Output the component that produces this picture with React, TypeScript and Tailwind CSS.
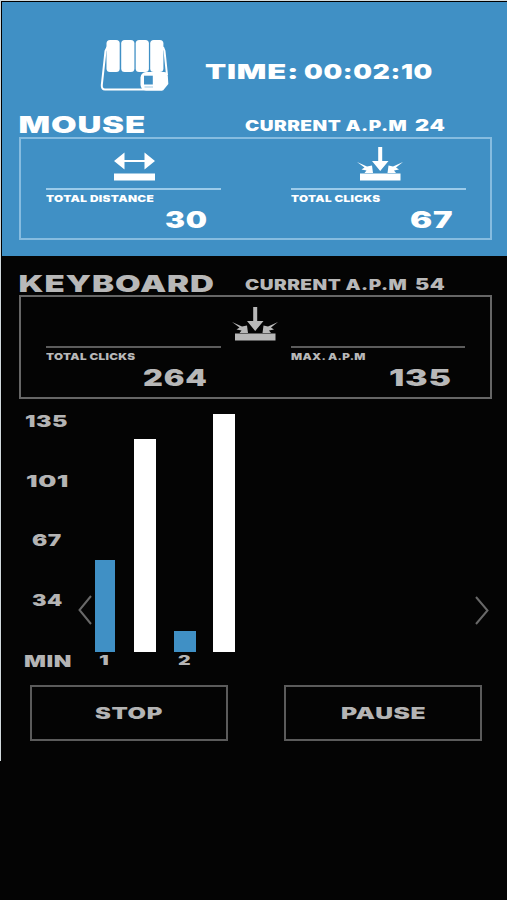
import React from "react";
import clsx from "clsx";

type WideTextProps = {
  text: string;
  width: number;
  className?: string;
};

// Stretches a label sideways until its ink fills the given width.
function WideText({ text, width, className }: WideTextProps) {
  const ref = React.useRef<HTMLSpanElement>(null);
  const [transform, setTransform] = React.useState("none");

  React.useLayoutEffect(() => {
    const ctx = document.createElement("canvas").getContext("2d");
    if (!ref.current || !ctx) return;
    const style = getComputedStyle(ref.current);
    ctx.font = `${style.fontWeight} ${style.fontSize} ${style.fontFamily}`;
    const spacing = parseFloat(style.letterSpacing) || 0;
    const box = ctx.measureText(text);
    const ink =
      box.actualBoundingBoxLeft +
      box.actualBoundingBoxRight +
      spacing * (text.length - 1);
    const scale = width / ink;
    setTransform(
      `translateX(${box.actualBoundingBoxLeft * scale}px) scaleX(${scale})`
    );
  }, [text, width]);

  return (
    <span
      className={clsx(
        "block h-4 text-left leading-4 font-black tracking-wide whitespace-nowrap",
        className
      )}
      style={{ width }}
    >
      <span ref={ref} className="inline-block origin-left" style={{ transform }}>
        {text}
      </span>
    </span>
  );
}

function Logo() {
  return (
    <svg width="70" height="54" viewBox="0 0 70 54" fill="none">
      <path
        d="M7.500 8 L5.500 12 L1.800 46 Q1.500 50.500 5 50.500 H62"
        stroke="white"
        strokeWidth="2"
      />
      <path d="M63 8 L64.500 12 L67 36" stroke="white" strokeWidth="2" />
      <rect x="6.500" y="1" width="13.200" height="32" rx="3.500" fill="white" />
      <rect x="21.200" y="1" width="13.200" height="32" rx="3.500" fill="white" />
      <rect x="35.700" y="1" width="13.200" height="32" rx="3.500" fill="white" />
      <rect x="50.200" y="1" width="13.200" height="32" rx="3.500" fill="white" />
      <path
        d="M46 33 H64 Q67.500 33 67.800 37 L68.300 45 L63 51.500 H46 Q41 51 40.500 46 V38.500 Q41 33.500 46 33 Z"
        fill="white"
      />
      <rect x="44" y="36.700" width="8.800" height="8.800" fill="#4090c5" />
      <path d="M44.500 48 H53" stroke="#4090c5" strokeWidth="1" opacity="0.5" />
    </svg>
  );
}

function DistanceIcon() {
  return (
    <svg width="41" height="34" viewBox="0 0 41 34" fill="white" className="ml-0.5">
      <path d="M0 14 L10.500 5.500 V13 H30.500 V5.500 L41 14 L30.500 22.500 V15 H10.500 V22.500 Z" />
      <rect y="26.500" width="41" height="7" />
    </svg>
  );
}

function ClickIcon({ className }: { className?: string }) {
  return (
    <svg width="48" height="34" viewBox="0 0 48 34" fill="currentColor" className={className}>
      <path d="M22.200 0 H26.200 V14 H32.500 L24.200 24 L16 14 H22.200 Z" />
      <path d="M1 15 L11 19.500 L16 18.500 L17 26 H8.500 L10.500 23.500 L5.500 22.500 L8.500 20.500 Z" />
      <path d="M47 15 L37 19.500 L32.500 18.500 L31.500 26 H40 L38 23.500 L43 22.500 L40 20.500 Z" />
      <rect x="4" y="26.500" width="40.500" height="7" />
    </svg>
  );
}

type StatProps = {
  label: string;
  labelWidth: number;
  value: string;
  valueWidth: number;
  lineClass: string;
};

function Stat({ label, labelWidth, value, valueWidth, lineClass }: StatProps) {
  return (
    <div className="flex w-[175px] flex-col">
      <div className={clsx("h-0.5", lineClass)} />
      <WideText text={label} width={labelWidth} className="mt-px text-[9.5px]" />
      <WideText text={value} width={valueWidth} className="mt-[5px] mr-3.5 self-end text-[22.5px]" />
    </div>
  );
}

type SectionTitleProps = {
  title: string;
  titleWidth: number;
  apm: string;
};

function SectionTitle({ title, titleWidth, apm }: SectionTitleProps) {
  return (
    <div className="flex items-center pl-[18px]">
      <div className="w-[225px]">
        <WideText text={title} width={titleWidth} className="text-[23px]" />
      </div>
      <WideText text="CURRENT A.P.M" width={162} className="mt-0.5 text-[14.5px]" />
      <WideText text={apm} width={30} className="ml-2 pt-px text-[15.5px]" />
    </div>
  );
}

const axisLabels = [
  { text: "135", width: 43 },
  { text: "101", width: 42 },
  { text: "67", width: 30 },
  { text: "34", width: 30 },
];

const minutes = [
  { minute: "1", labelWidth: 10, mouse: 92, keyboard: 213 },
  { minute: "2", labelWidth: 12, mouse: 21, keyboard: 238 },
];

function Chart() {
  return (
    <div className="relative flex h-[258px] text-[#b4b4b4]">
      <div className="flex w-[93px] flex-col pl-[22px]">
        {axisLabels.map((label) => (
          <div className="flex h-[59.500px] w-[45px] justify-center" key={label.text}>
            <WideText text={label.text} width={label.width} className="text-[16px]" />
          </div>
        ))}
        <WideText text="MIN" width={47} className="mt-0.5 text-[16px]" />
      </div>
      <div className="flex gap-[18px]">
        {minutes.map((item) => (
          <div className="flex w-[61px] flex-col" key={item.minute}>
            <div className="flex h-[239px] items-end justify-between">
              <div
                className={clsx("bg-[#4090c5]", item.minute === "1" ? "w-5" : "w-[22px]")}
                style={{ height: item.mouse }}
              />
              <div className="w-[22px] bg-white" style={{ height: item.keyboard }} />
            </div>
            <WideText text={item.minute} width={item.labelWidth} className="ml-1 text-[13px]" />
          </div>
        ))}
      </div>
      <svg className="absolute top-[182px] left-[76px]" width="14" height="30" fill="none">
        <path d="M13 1 L1.500 15 L13 29" stroke="#686868" strokeWidth="2" />
      </svg>
      <svg className="absolute top-[183px] left-[473px]" width="14" height="30" fill="none">
        <path d="M1 1 L12.500 14.500 L1 28" stroke="#686868" strokeWidth="2" />
      </svg>
    </div>
  );
}

function ActionButton({ text, width }: { text: string; width: number }) {
  return (
    <button className="flex h-14 w-[198px] items-center justify-center border-2 border-[#5b5b5b] text-[#b4b4b4]">
      <WideText text={text} width={width} className="text-[16px]" />
    </button>
  );
}

export default function App() {
  return (
    <main className="h-[900px] w-[507px] overflow-hidden bg-[#040404] font-['Inter',sans-serif]">
      <div className="h-[761px] border-t border-l border-[#d2dadd]">
        <div className="border-t border-l border-black">
          <section className="h-[254px] bg-[#4090c5] text-white">
            <header className="flex h-[114px] items-start pt-[37px] pl-[98px]">
              <Logo />
              <WideText text="TIME:" width={91} className="mt-[25px] ml-[35px] text-[20.5px]" />
              <WideText text="00:02:10" width={128} className="mt-[25px] ml-2 text-[20px]" />
            </header>
            <SectionTitle title="MOUSE" titleWidth={125} apm="24" />
            <div className="mt-[3px] ml-[17px] flex h-[103px] w-[473px] gap-[70px] border-2 border-[#86bce0] px-[25px]">
              <div className="flex flex-col items-center pt-2">
                <DistanceIcon />
                <div className="pt-[7px]">
                  <Stat
                    label="TOTAL DISTANCE"
                    labelWidth={108}
                    value="30"
                    valueWidth={42}
                    lineClass="bg-[#9ccbea]"
                  />
                </div>
              </div>
              <div className="flex flex-col items-center pt-2">
                <ClickIcon className="ml-0.5" />
                <div className="pt-[7px]">
                  <Stat
                    label="TOTAL CLICKS"
                    labelWidth={90}
                    value="67"
                    valueWidth={42}
                    lineClass="bg-[#9ccbea]"
                  />
                </div>
              </div>
            </div>
          </section>
          <section className="pt-[19px] text-[#b8b8b8]">
            <SectionTitle title="KEYBOARD" titleWidth={193} apm="54" />
            <div className="relative mt-0.5 ml-[17px] flex h-[104px] w-[473px] gap-[70px] border-2 border-[#666666] px-[25px] pt-[49px]">
              <ClickIcon className="absolute top-[10px] left-[210px]" />
              <Stat
                label="TOTAL CLICKS"
                labelWidth={90}
                value="264"
                valueWidth={64}
                lineClass="bg-[#5c5c5c]"
              />
              <Stat
                label="MAX. A.P.M"
                labelWidth={75}
                value="135"
                valueWidth={62}
                lineClass="bg-[#5c5c5c]"
              />
            </div>
          </section>
          <div className="mt-[14px]">
            <Chart />
          </div>
          <div className="mt-[14px] flex gap-14 pl-7">
            <ActionButton text="STOP" width={68} />
            <ActionButton text="PAUSE" width={85} />
          </div>
        </div>
      </div>
    </main>
  );
}
